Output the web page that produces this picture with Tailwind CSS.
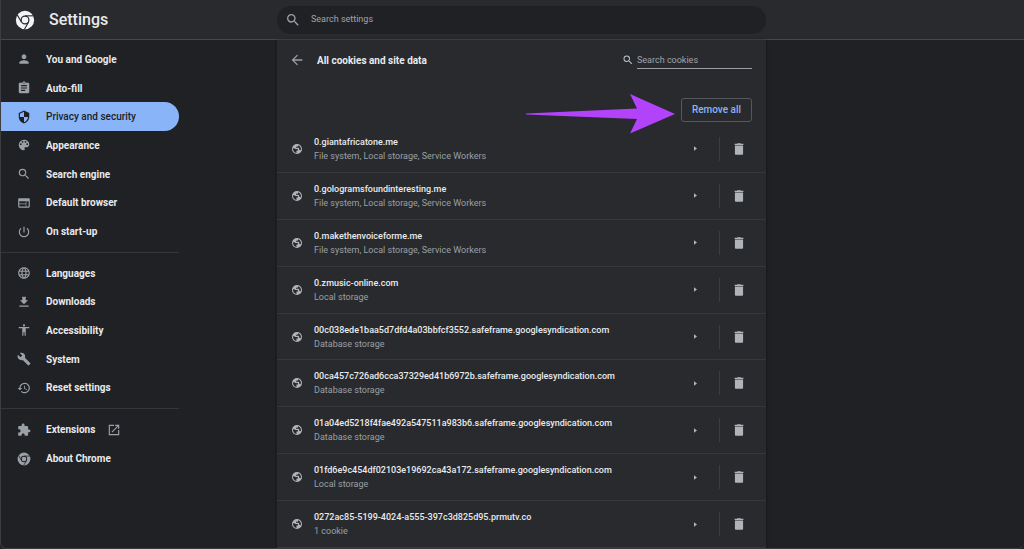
<!DOCTYPE html>
<html lang="en-GB">
<head>
<meta charset="utf-8">
<meta name="viewport" content="width=device-width, initial-scale=1">
<title>Settings</title>
<script src="https://cdn.jsdelivr.net/npm/@tailwindcss/browser@4"></script>
</head>
<body class="bg-[#202125] text-[#e8eaed] font-['Roboto','Liberation_Sans',sans-serif]">
<svg class="hidden" aria-hidden="true">
  <symbol id="chrome" viewBox="0 0 24 24"><path fill-rule="evenodd" d="M12 1a11 11 0 1 0 0 22 11 11 0 0 0 0-22zm0 5.600a5.400 5.400 0 1 1 0 10.800 5.400 5.400 0 0 1 0-10.800z"/><circle cx="12" cy="12" r="3.900"/><g stroke="#26272b" stroke-width="1.300"><path d="M12 7h10"/><path d="M12 7h10" transform="rotate(120 12 12)"/><path d="M12 7h10" transform="rotate(240 12 12)"/></g></symbol>
  <symbol id="person" viewBox="0 0 24 24"><path d="M12 12c2.210 0 4-1.790 4-4s-1.790-4-4-4-4 1.790-4 4 1.790 4 4 4zm0 2c-2.670 0-8 1.340-8 4v2h16v-2c0-2.660-5.330-4-8-4z"/></symbol>
  <symbol id="assignment" viewBox="0 0 24 24"><path d="M19 3h-4.180C14.400 1.840 13.300 1 12 1s-2.400.84-2.820 2H5c-1.100 0-2 .9-2 2v14c0 1.100.9 2 2 2h14c1.100 0 2-.9 2-2V5c0-1.100-.9-2-2-2zm-7 0c.55 0 1 .45 1 1s-.45 1-1 1-1-.45-1-1 .45-1 1-1zm2 14H7v-2h7v2zm3-4H7v-2h10v2zm0-4H7V7h10v2z"/></symbol>
  <symbol id="shield" viewBox="0 0 24 24"><path d="M12 1 3 5v6c0 5.550 3.840 10.740 9 12 5.160-1.260 9-6.450 9-12V5l-9-4zm0 10.990h7c-.53 4.120-3.280 7.790-7 8.940V12H5V6.300l7-3.110v8.800z"/></symbol>
  <symbol id="palette" viewBox="0 0 24 24"><path d="M12 3a9 9 0 0 0 0 18c.83 0 1.500-.67 1.500-1.500 0-.39-.15-.74-.39-1.010-.23-.26-.38-.61-.38-.99 0-.83.67-1.500 1.500-1.500H16c2.760 0 5-2.240 5-5 0-4.420-4.030-8-9-8zm-5.500 9a1.500 1.500 0 1 1 0-3 1.500 1.500 0 0 1 0 3zm3-4a1.500 1.500 0 1 1 0-3 1.500 1.500 0 0 1 0 3zm5 0a1.500 1.500 0 1 1 0-3 1.500 1.500 0 0 1 0 3zm3 4a1.500 1.500 0 1 1 0-3 1.500 1.500 0 0 1 0 3z"/></symbol>
  <symbol id="search" viewBox="0 0 24 24"><path d="M15.500 14h-.79l-.28-.27A6.471 6.471 0 0 0 16 9.500 6.500 6.500 0 1 0 9.500 16c1.610 0 3.090-.59 4.230-1.570l.27.28v.79l5 4.990L20.490 19l-4.990-5zm-6 0C7.010 14 5 11.990 5 9.500S7.010 5 9.500 5 14 7.010 14 9.500 11.990 14 9.500 14z"/></symbol>
  <symbol id="web" viewBox="0 0 24 24"><path d="M20 4H4c-1.100 0-2 .9-2 2v12c0 1.100.9 2 2 2h16c1.100 0 2-.9 2-2V6c0-1.100-.9-2-2-2zm-5 14H4v-4h11v4zm0-5H4V9h11v4zm5 5h-4V9h4v9z"/></symbol>
  <symbol id="power" viewBox="0 0 24 24"><path d="M13 3h-2v10h2V3zm4.830 2.170-1.420 1.420A6.920 6.920 0 0 1 19 12a7 7 0 1 1-11.420-5.420L6.170 5.170A8.932 8.932 0 0 0 3 12a9 9 0 0 0 18 0c0-2.740-1.230-5.180-3.170-6.830z"/></symbol>
  <symbol id="language" viewBox="0 0 24 24"><path d="M11.990 2C6.470 2 2 6.480 2 12s4.470 10 9.990 10C17.520 22 22 17.520 22 12S17.520 2 11.990 2zm6.930 6h-2.950a15.650 15.650 0 0 0-1.380-3.560A8.030 8.030 0 0 1 18.920 8zM12 4.040c.83 1.200 1.480 2.530 1.910 3.960h-3.820c.43-1.430 1.080-2.760 1.910-3.960zM4.260 14a8.200 8.200 0 0 1 0-4h3.380a16.500 16.500 0 0 0 0 4H4.260zm.82 2h2.950c.32 1.250.78 2.450 1.380 3.560A7.987 7.987 0 0 1 5.080 16zm2.950-8H5.080a7.987 7.987 0 0 1 4.330-3.560A15.650 15.650 0 0 0 8.030 8zM12 19.960c-.83-1.200-1.480-2.530-1.910-3.960h3.820c-.43 1.430-1.080 2.760-1.910 3.960zM14.340 14H9.660a14.700 14.700 0 0 1 0-4h4.680a14.700 14.700 0 0 1 0 4zm.25 5.560c.6-1.110 1.060-2.310 1.380-3.560h2.950a8.030 8.030 0 0 1-4.330 3.560zM16.360 14a16.500 16.500 0 0 0 0-4h3.380a8.200 8.200 0 0 1 0 4h-3.380z"/></symbol>
  <symbol id="download" viewBox="0 0 24 24"><path d="M19 9h-4V3H9v6H5l7 7 7-7zM4 18v2h16v-2H4z"/></symbol>
  <symbol id="accessibility" viewBox="0 0 24 24"><path d="M12 2a2 2 0 1 1 0 4 2 2 0 0 1 0-4zm9 7h-6v13h-2v-6h-2v6H9V9H3V7h18v2z"/></symbol>
  <symbol id="build" viewBox="0 0 24 24"><path d="m22.700 19-9.100-9.100c.9-2.300.4-5-1.500-6.900-2-2-5-2.400-7.400-1.300L9 6 6 9 1.600 4.700C.4 7.100.9 10.100 2.900 12.100c1.900 1.900 4.600 2.400 6.900 1.500l9.100 9.100c.4.4 1 .4 1.400 0l2.300-2.300c.5-.4.500-1.100.1-1.400z"/></symbol>
  <symbol id="restore" viewBox="0 0 24 24"><path d="M13 3a9 9 0 0 0-9 9H1l3.890 3.890.07.14L9 12H6a7 7 0 1 1 2.060 4.940l-1.420 1.420A9 9 0 1 0 13 3zm-1 5v5l4.280 2.540.72-1.210-3.500-2.080V8H12z"/></symbol>
  <symbol id="extension" viewBox="0 0 24 24"><path d="M20.500 11H19V7c0-1.100-.9-2-2-2h-4V3.500a2.500 2.500 0 0 0-5 0V5H4c-1.100 0-1.990.9-1.990 2v3.800H3.500c1.490 0 2.700 1.210 2.700 2.700s-1.210 2.700-2.700 2.700H2V20c0 1.100.9 2 2 2h3.800v-1.500c0-1.490 1.210-2.700 2.700-2.700s2.700 1.210 2.700 2.700V22H17c1.100 0 2-.9 2-2v-4h1.500a2.500 2.500 0 0 0 0-5z"/></symbol>
  <symbol id="open" viewBox="0 0 24 24"><path d="M19 19H5V5h7V3H3v18h18v-9h-2v7zM14 3v2h3.590l-9.830 9.830 1.410 1.410L19 6.410V10h2V3h-7z"/></symbol>
  <symbol id="back" viewBox="0 0 24 24"><path d="M20 11H7.830l5.590-5.590L12 4l-8 8 8 8 1.410-1.410L7.830 13H20v-2z"/></symbol>
  <symbol id="globe" viewBox="0 0 24 24"><path d="M12 2a10 10 0 1 0 0 20 10 10 0 0 0 0-20zm-1 17.930A8 8 0 0 1 4.100 10.700C6 10 8 10.500 9 12h3c1.500 0 2 1 2 2v1h-2c-1 0-1.500 1-1 2v2.930zM19.300 15c-.4-.7-1-1-1.800-1h-1v-2c0-1.500-1-2.500-2.500-2.500h-4v-2h2c1.100 0 2-.9 2-2V4.300A8 8 0 0 1 19.300 15z"/></symbol>
  <symbol id="trash" viewBox="0 0 24 24"><path d="M5 20c0 1.100.9 2 2 2h10c1.100 0 2-.9 2-2V6H5v14zM19.500 3H15.500l-1-1h-5l-1 1h-4v2h15V3z"/></symbol>
</svg>

<div class="flex h-screen min-h-[549px] flex-col overflow-hidden rounded-b-md border-b border-l border-[#3c3d41]">
  <header class="flex h-10 shrink-0 items-center border-b border-[#47484c] bg-[#292a2e]">
    <div class="flex w-[276px] shrink-0 items-center gap-3.5 pl-3.5">
      <svg class="size-5 fill-[#f1f3f4]"><use href="#chrome"/></svg>
      <h1 class="text-base font-medium">Settings</h1>
    </div>
    <label class="flex h-7 w-[489px] items-center gap-2.5 rounded-full bg-[#202124] px-2">
      <svg class="size-4 shrink-0 fill-[#9aa0a6]"><use href="#search"/></svg>
      <input type="search" aria-label="Search settings" placeholder="Search settings" class="w-full bg-transparent text-[9px] outline-none placeholder:text-[#a0a4a9]">
    </label>
  </header>

  <div class="flex min-h-0 flex-1">
    <nav id="menu" aria-label="Settings" class="w-[276px] shrink-0 pt-[5px]"></nav>

    <main class="flex w-[489px] flex-col bg-[#292a2e] shadow-[0_0_3px_#0006]">
      <div class="flex h-10 shrink-0 items-center pl-3 pr-3.5">
        <button aria-label="Back" class="flex"><svg class="size-4 fill-[#9aa0a6]"><use href="#back"/></svg></button>
        <h2 class="ml-3 flex-1 text-[10px] font-bold">All cookies and site data</h2>
        <label class="flex items-center gap-[3px]">
          <svg class="size-3 fill-[#bdc1c6]"><use href="#search"/></svg>
          <input type="search" aria-label="Search cookies" placeholder="Search cookies" class="h-[18px] w-[115px] border-b border-[#9aa0a6] bg-transparent text-[9px] outline-none placeholder:text-[#a0a4a9]">
        </label>
      </div>
      <div class="flex h-[46px] shrink-0 items-start justify-end pr-3.5 pt-4">
        <div class="relative">
          <svg viewBox="0 0 149 40" class="absolute right-[77px] -top-[2px] h-10 w-[149px] max-w-none fill-[#b342fb]"><path d="M0 19.500 111 14.500 104 0 149 20 104 39.500 111 25 0 20.500Z"/></svg>
          <button class="h-6 w-[71px] rounded-[3px] border border-[#54575b] text-[10px] font-medium text-[#8ab4f8]">Remove all</button>
        </div>
      </div>
      <ul id="sites" class="flex flex-1 flex-col"></ul>
    </main>
  </div>
</div>

<script>
  const groups = [
    ['h-[201px]', [['person', 'You and Google'], ['assignment', 'Auto-fill'], ['shield', 'Privacy and security'], ['palette', 'Appearance'], ['search', 'Search engine'], ['web', 'Default browser'], ['power', 'On start-up']]],
    ['h-[143px]', [['language', 'Languages'], ['download', 'Downloads'], ['accessibility', 'Accessibility'], ['build', 'System'], ['restore', 'Reset settings']]],
    ['h-[58px]', [['extension', 'Extensions'], ['chrome', 'About Chrome']]]
  ];
  const open = '<svg class="ml-3 size-3.5 fill-[#9aa0a6]"><use href="#open"/></svg>';
  document.getElementById('menu').innerHTML = groups.map(([height, items]) =>
    `<ul class="${height} grid auto-rows-fr">${items.map(([icon, name]) => {
      const on = icon === 'shield';
      return `<li class="w-[178px]"><a href="#" ${on ? 'aria-current="page"' : ''} class="flex h-full items-center rounded-r-full pl-4 text-[10px] ${on ? 'font-medium bg-[#8ab4f8] text-[#202124] fill-[#202124]' : 'font-bold fill-[#9aa0a6]'}"><svg class="mr-[15px] size-3.5"><use href="#${icon}"/></svg>${name}${icon === 'extension' ? open : ''}</a></li>`;
    }).join('')}</ul>`).join('<hr class="my-1.5 w-[178px] border-[#35363a]">');

  const sites = [
    ['0.giantafricatone.me', 'File system, Local storage, Service Workers'],
    ['0.gologramsfoundinteresting.me', 'File system, Local storage, Service Workers'],
    ['0.makethenvoiceforme.me', 'File system, Local storage, Service Workers'],
    ['0.zmusic-online.com', 'Local storage'],
    ['00c038ede1baa5d7dfd4a03bbfcf3552.safeframe.googlesyndication.com', 'Database storage'],
    ['00ca457c726ad6cca37329ed41b6972b.safeframe.googlesyndication.com', 'Database storage'],
    ['01a04ed5218f4fae492a547511a983b6.safeframe.googlesyndication.com', 'Database storage'],
    ['01fd6e9c454df02103e19692ca43a172.safeframe.googlesyndication.com', 'Local storage'],
    ['0272ac85-5199-4024-a555-397c3d825d95.prmutv.co', '1 cookie']
  ];
  document.getElementById('sites').innerHTML = sites.map(([name, data]) =>
    `<li class="flex flex-1 items-center border-b border-[#37383c] pl-3.5">
      <svg class="mr-[11px] size-3 shrink-0 fill-[#b0b4b9]"><use href="#globe"/></svg>
      <div class="min-w-0 flex-1 text-[9px] leading-[14px]"><p class="font-medium">${name}</p><p class="text-[#9aa0a6]">${data}</p></div>
      <button aria-label="Show ${name}" class="flex w-3 justify-center"><svg viewBox="0 0 4 6" class="h-[5px] w-[3px] fill-[#b0b4b9]"><path d="M0 0 4 3 0 6Z"/></svg></button>
      <span class="ml-[18px] h-6 w-px bg-[#3c3d41]"></span>
      <button aria-label="Remove ${name}" class="mx-3 flex"><svg class="size-3.5 fill-[#b0b4b9]"><use href="#trash"/></svg></button>
      <span class="w-2"></span>
    </li>`).join('');
</script>
</body>
</html>
